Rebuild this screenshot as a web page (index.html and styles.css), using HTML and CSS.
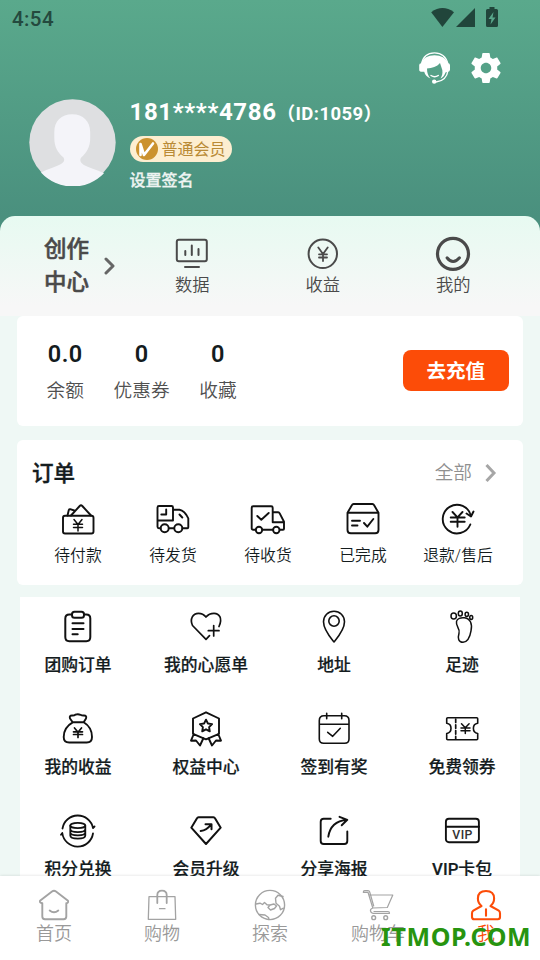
FILE: index.html
```html
<!DOCTYPE html>
<html lang="zh-CN">
<head>
<meta charset="utf-8">
<meta name="viewport" content="width=device-width, initial-scale=1">
<title>我</title>
<link rel="stylesheet" href="styles.css">
</head>
<body>
<div class="app">
  <header class="header">
    <div class="status">
      <span class="clock">4:54</span>
      <svg class="status-icons" viewBox="0 0 70 22">
        <path d="M2.200 5.200Q13.500-3 25 5.200L13.400 20Z"/>
        <path d="M46 1V20H27Z"/>
        <path fill-rule="evenodd" d="M60.500 0h5v2h2q1.500 0 1.500 1.500v15q0 1.500-1.500 1.500h-9q-1.500 0-1.500-1.500v-15q0-1.500 1.500-1.500h2zM64.500 5l-5 7h3l-1 5.500 5-7h-3z"/>
      </svg>
    </div>
    <div class="actions">
      <svg class="act" viewBox="0 0 36 36">
        <path class="hl" d="M4.500 14C6 6 11.500 2.800 17.500 2.800S29 6 31 14" stroke-width="1.300"/>
        <path class="hf" d="M2.200 15q0-1.500 2-1.700C6 8 11 5.300 17.500 5.300S29 8 31 13.300q2 .2 2 2v4.500q0 2-2.500 2l-2 .7c-1 3-2.500 5-5 6 1.500-2.500 2.300-5 1.800-8.500L23 13c-3 4-8 4.800-13 5.500 0 4 1 7.500 3.500 10C10 27 8 25 7.200 21.700H5q-2.800 0-2.800-2z"/>
        <path class="hl" d="M14 25.500q3.700 2.500 7.300 0M31 20.500q-1.500 10.500-12 11.500" stroke-width="1.400"/>
        <circle class="hf" cx="17.200" cy="31.600" r="2.200"/>
      </svg>
      <svg class="act" viewBox="0 0 24 24"><path class="hf" d="M19.430 12.980c.04-.32.07-.64.07-.98s-.03-.66-.07-.98l2.110-1.650c.19-.15.24-.42.12-.64l-2-3.460c-.12-.22-.39-.3-.61-.22l-2.490 1c-.52-.4-1.080-.73-1.690-.98l-.38-2.650C14.460 2.180 14.250 2 14 2h-4c-.25 0-.46.18-.49.42l-.38 2.650c-.61.25-1.170.59-1.690.98l-2.490-1c-.23-.09-.49 0-.61.22l-2 3.460c-.13.22-.07.49.12.64l2.110 1.650c-.04.32-.07.65-.07.98s.03.66.07.98l-2.110 1.650c-.19.15-.24.42-.12.64l2 3.460c.12.22.39.3.61.22l2.490-1c.52.4 1.080.73 1.690.98l.38 2.650c.03.24.24.42.49.42h4c.25 0 .46-.18.49-.42l.38-2.650c.61-.25 1.170-.59 1.690-.98l2.490 1c.23.09.49 0 .61-.22l2-3.460c.12-.22.07-.49-.12-.64zM12 15.500c-1.930 0-3.500-1.570-3.500-3.500s1.570-3.500 3.500-3.500 3.500 1.570 3.500 3.500-1.570 3.500-3.500 3.500z"/></svg>
    </div>
    <div class="profile">
      <svg class="avatar" viewBox="0 0 87 87">
        <circle cx="43.500" cy="43.500" r="43.200" fill="#dedfe1"/>
        <path fill="#f4f4f9" d="M43.200 15.300c11 0 18 7 18 18v6c0 9-4 15-9.200 19.500-1.500 2.500-.5 5 2.500 7 5 3 13 5 20.500 8.500A43.200 43.200 0 0 1 12 73.500c7-3.500 15-5.500 20-8.500 3-2 4-4 2.500-6.500-5.500-4.500-9.200-10.500-9.200-19.500v-6c0-11 7-17.700 17.900-17.700z"/>
      </svg>
      <div class="who">
        <div class="name">181****4786<small>（ID:1059）</small></div>
        <div class="badge">
          <svg viewBox="0 0 22 22"><circle cx="11" cy="11" r="11" fill="#cb922f"/><path d="M4.500 6l3.500 11L17 5.500M4.500 6v11" fill="none" stroke="#fff" stroke-width="2.600"/></svg>
          <span>普通会员</span>
        </div>
        <div class="sign">设置签名</div>
      </div>
    </div>
  </header>

  <section class="creator">
    <div class="creator-title">
      <span>创作<br>中心</span>
      <svg viewBox="0 0 12 18"><path d="M2 2l7 7-7 7"/></svg>
    </div>
    <div class="creator-item">
      <svg viewBox="0 0 36 36"><rect x="2.800" y="3.800" width="30" height="21.500" rx="2"/><path d="M11.300 15v4M17.800 9.500V19M24.500 13v6M11 31h14"/></svg>
      <span>数据</span>
    </div>
    <div class="creator-item">
      <svg viewBox="0 0 36 36"><circle cx="17.800" cy="17.800" r="14.200"/><path d="M13.300 11.500l4.700 6.500 4.700-6.500M18 18v7M14 18.300h8M14 21.500h8" stroke-width="1.800"/></svg>
      <span>收益</span>
    </div>
    <div class="creator-item">
      <svg viewBox="0 0 36 36"><circle cx="18" cy="17.800" r="15.500" stroke-width="3.200"/><path d="M12 21.800q6 7.500 12.500 0" stroke-width="3"/></svg>
      <span>我的</span>
    </div>
  </section>

  <section class="card wallet">
    <div class="stat"><b>0.0</b><span>余额</span></div>
    <div class="stat"><b>0</b><span>优惠券</span></div>
    <div class="stat"><b>0</b><span>收藏</span></div>
    <div class="recharge">去充值</div>
  </section>

  <section class="card orders">
    <div class="orders-head">
      <h2>订单</h2>
      <span class="all">全部</span>
      <svg viewBox="0 0 12 20"><path d="M1.500 2l7.500 8-7.500 8"/></svg>
    </div>
    <div class="order-row">
      <div class="order"><svg viewBox="0 0 36 36"><rect x="3" y="14.800" width="30.500" height="17.700" rx="2"/><path d="M11 14.500L19.700 5q1.300-1.300 2.600 0l8.700 9.500M7.500 14.500l1.300-5.500q.4-1 1.400-.8l4 1.300"/><path d="M14 18.500l4 5 4-5M18 23.500V30M13.500 23.300h9M13.500 26.500h9" stroke-width="1.500"/></svg><span>待付款</span></div>
      <div class="order"><svg viewBox="0 0 36 36"><path d="M5.500 27.300H4q-1.500 0-1.500-1.500V6.500Q2.500 5 4 5h12.500Q18 5 18 6.500v13H2.500M18 8.800h6.500q5 .8 8.800 8.500v9q0 1-1 1h-4.800M13.800 27.300h5.300M11.200 8.500v5H6.300M24.500 13.500l2.800 3"/><circle cx="9.700" cy="27.300" r="4"/><circle cx="23.300" cy="27.300" r="4"/></svg><span>待发货</span></div>
      <div class="order"><svg viewBox="0 0 36 36"><path d="M5.500 28.700H3.200q-1.500 0-1.500-1.500V6.800q0-1.500 1.500-1.500h18q1.500 0 1.500 1.500v14.500H34M22.700 11.300h5.500q1 0 1.500 1l4.300 8.500v7q0 .9-1 .9h-3M12.500 28.700H23M7.300 15l4 3.700 7.400-6.700"/><circle cx="9" cy="29" r="3.200"/><circle cx="26.300" cy="29" r="3.200"/></svg><span>待收货</span></div>
      <div class="order"><svg viewBox="0 0 36 36"><path d="M2.500 11.800L7 4q.5-1 1.500-1h19q1 0 1.500 1l4.500 7.800V29q0 3.300-3.300 3.300H5.800Q2.500 32.300 2.500 29zM2.500 11.800h31M7 19.700h8M7 24.500h5.500M19 22l3.300 3.700 6-7.700"/></svg><span>已完成</span></div>
      <div class="order"><svg viewBox="0 0 36 36"><path d="M30.300 23.500A14.300 14.300 0 1 1 31 15M26.500 12.500l4.500 3 2.500-5M12.500 11l5 5.300 5-5.300M17.500 16.300v9.500M10.700 16.500h14M10.700 20.700h14"/></svg><span>退款/售后</span></div>
    </div>
  </section>

  <section class="tools">
    <div class="tool"><svg viewBox="0 0 36 36"><path d="M12 5.500H9.300q-4 0-4 4V28q0 4.200 4 4.200h17q4 0 4-4.200V9.500q0-4-4-4H24M12.500 14.300h11M12.500 20h11M12.500 25.300h5.200" stroke-width="2"/><rect x="12" y="2.800" width="12" height="6" rx="2.500" stroke-width="2"/></svg><span>团购订单</span></div>
    <div class="tool"><svg viewBox="0 0 36 36"><path d="M31 17.500C35 9 31 4.300 26 4.300Q21 4.300 18 8 15 4.300 10.500 4.300C5 4.300 1.500 10 4.500 16.500L18 30.300l3.500-3.600M25.700 16.500V27M20.300 21.700H31" stroke-width="1.700"/></svg><span>我的心愿单</span></div>
    <div class="tool"><svg viewBox="0 0 36 36"><path d="M18 33C14 28 7.500 20.500 7.500 12.700a10.500 10.500 0 0 1 21 0C28.500 20.500 22 28 18 33z" stroke-width="1.600"/><circle cx="18" cy="12" r="5.200" stroke-width="1.600"/></svg><span>地址</span></div>
    <div class="tool"><svg viewBox="0 0 36 36"><g stroke-width="1.500"><path d="M12.500 12.500C13 9.500 17 8.300 20.500 8.800c6 1 8 6 6.500 13-1 6-3 11-8 11.500-4.500 0-5.500-4-4-9 1.500-5-3.500-6.500-2.500-11.800z"/><ellipse cx="9.700" cy="7" rx="2.700" ry="3"/><ellipse cx="16.300" cy="4.500" rx="2" ry="2.500"/><ellipse cx="22.800" cy="5.300" rx="1.700" ry="2.100"/><ellipse cx="27.200" cy="8.500" rx="1.500" ry="1.900"/></g></svg><span>足迹</span></div>

    <div class="tool"><svg viewBox="0 0 36 36"><path d="M12.700 11.300L10 7.500q-1-3 2-3 2.200.2 3.300-.8Q18 2.800 20.500 3.800q1.500.9 3.500.7 3 0 2 3l-2.300 3.800zM12.700 11.300C7 14.500 3.700 20 3.700 26q0 5.500 5.500 5.500h17.500q5.300 0 5.300-5.500c0-6-3-11.500-8.300-14.700" stroke-width="1.900"/><path d="M14.500 17l3.500 4.200 3.500-4.200M18 21v5.500M13.500 20.800h9M13.500 23.500h9" stroke-width="1.700"/></svg><span>我的收益</span></div>
    <div class="tool"><svg viewBox="0 0 36 36"><path d="M18 1.300L31 7.500v15.300l-13 5.500-13-5.500V7.500zM5.800 23L3 29.700l5-.2 4 5 3.500-7.500M30.200 23l2.800 6.700-5-.2-4 5-3.500-7.500" stroke-width="1.900"/><path d="M18 8.700l1.900 3.800 4.200.6-3 3 .7 4.200-3.800-2-3.800 2 .7-4.200-3-3 4.200-.6z" stroke-width="1.900"/></svg><span>权益中心</span></div>
    <div class="tool"><svg viewBox="0 0 36 36"><path d="M10.700 2.300v5.400M25.700 2.300v5.400M10.700 4.800h15M10.700 4.800H8Q3.300 4.800 3.300 9.500V28q0 4.300 4.500 4.300h20.700Q33 32.300 33 28V9.500q0-4.700-4.700-4.700h-2.600M3.300 13.300H33M11.700 21.300l5 4 7.600-8" stroke-width="1.600"/></svg><span>签到有奖</span></div>
    <div class="tool"><svg viewBox="0 0 36 36"><path d="M3.700 6.700h29q1 0 1 1v4.500a5 5.200 0 0 0 0 10.300v5.200q0 1-1 1h-29q-1 0-1-1v-5.200a5 5.200 0 0 0 0-10.300V7.700q0-1 1-1z" stroke-width="1.600"/><path d="M11.700 8v20" stroke-width="1.700" stroke-dasharray="3.500 2.300"/><path d="M17.500 12.700l3.800 4 3.800-4M21.300 16.700V22.500M17 17h9M17 19.700h9" stroke-width="1.500"/></svg><span>免费领券</span></div>

    <div class="tool"><svg viewBox="0 0 36 36"><path d="M2.500 15.500A15.500 15.500 0 0 1 33 15l1.500-1.500M33 20.500A15.500 15.500 0 0 1 2.300 20L1 21.700" stroke-width="1.800"/><path d="M10.300 12.700v9.800c0 4.200 15 4.200 15 0v-9.800M10.300 16c0 4.200 15 4.200 15 0M10.300 19.300c0 4.200 15 4.200 15 0" stroke-width="1.800"/><ellipse cx="17.800" cy="12.500" rx="7.500" ry="2.700" stroke-width="1.800"/></svg><span>积分兑换</span></div>
    <div class="tool"><svg viewBox="0 0 36 36"><path d="M10.500 4.300h15q1 0 1.500 1l5.700 9.400L18 31 3.300 14.700 9 5.300q.5-1 1.500-1zM12.700 18q6-.5 10.300-6.500M17.500 11.300H23.500v5" stroke-width="2"/></svg><span>会员升级</span></div>
    <div class="tool"><svg viewBox="0 0 36 36"><path d="M14.700 5.700H7.700q-3 0-3 3V28q0 3 3 3h20.600q3 0 3-3V18.500M12.300 23.700Q14.500 8.500 31 6.800M23.500 3.800L31.300 6.800 25.700 12.300" stroke-width="1.900"/></svg><span>分享海报</span></div>
    <div class="tool"><svg viewBox="0 0 36 36"><rect x="1.900" y="5.700" width="33" height="23.600" rx="3" stroke-width="1.900"/><path d="M2 13.700h33" stroke-width="1.900"/><text x="18.600" y="25.900" class="vip">VIP</text></svg><span>VIP卡包</span></div>
  </section>

  <nav class="tabs">
    <div class="tab"><svg viewBox="0 0 36 36"><path d="M16 4.500q2-1.500 4 0l12 9.300q.7 2-1.700 2.500V29.500q0 2.700-2.800 2.700H9q-2.700 0-2.700-2.700V16.300Q3.300 15.800 4 13.800zM13.700 23.500q4.300 3.500 8.600 0" stroke-width="1.900"/></svg><span>首页</span></div>
    <div class="tab"><svg viewBox="0 0 36 36"><path d="M13.300 9.700H5L4.300 32.300h27.400L31 9.700h-8.300M15.500 21.700h5.500M13.300 9.700h9.400" stroke-width="1.300"/><path d="M13.300 16V8.300q0-4.600 4.700-4.600t4.700 4.600V16" stroke-width="1.800"/></svg><span>购物</span></div>
    <div class="tab"><svg viewBox="0 0 36 36"><circle cx="18" cy="18" r="14.600"/><path d="M4 17l4-.8 2.500 1.300 2-2 2.500 2.300 3.500.2M18 18l-2 2.500 2.500 2.500 4-1.500 2-2.500-2.500-2zM7 27.500l6 .5 3.500 2.500.5 2M31 9.500l-5-1.300-2.500 3 .5 5 3.500 3 1 3.500 3-1.500"/></svg><span>探索</span></div>
    <div class="tab"><svg viewBox="0 0 36 36"><path d="M9.300 8H32.800l-5.500 12.500-14.500.5L8 5.300H3.300q0-1.600 1.500-1.600H8q1.300 0 1.700 1.300l4 14M12.800 21q-2.800 1-2.300 3 .5 2.300 2.500 2.300h16.500q0-1.800-1.500-1.800H14" stroke-width="1.200"/><circle cx="13.700" cy="30.700" r="1.900"/><circle cx="25.700" cy="30.700" r="1.900"/></svg><span>购物车</span></div>
    <div class="tab active"><svg viewBox="0 0 36 36"><path d="M13.500 19Q9.900 16 9.900 11.500 9.900 4 18 4t8.100 7.500q0 4.500-3.600 7.500l8.300 4.700q1.200.8 1.200 2.500V30q0 2.200-2.200 2.200H6.200Q4 32.200 4 30v-3.800q0-1.700 1.300-2.500zM18 22.300v6.500" stroke-width="2.100"/></svg><span>我</span></div>
  </nav>
  <div class="watermark">ITMOP.COM</div>
</div>
</body>
</html>
```
FILE: styles.css
```css
* { box-sizing: border-box; }
body {
  margin: 0;
  font-family: Roboto, "Noto Sans CJK SC", sans-serif;
  color: #141c1e;
  background: #eff8f5;
}
.app {
  position: relative;
  width: 540px;
  height: 960px;
  overflow: hidden;
  display: flex;
  flex-direction: column;
}
svg { display: block; flex: none; fill: none; stroke-linecap: round; stroke-linejoin: round; }
span { white-space: nowrap; }

.header {
  flex: none;
  height: 232px;
  background: linear-gradient(#5aa98c, #4a907e 216px);
}
.status { display: flex; justify-content: space-between; height: 37px; padding: 7px 41px 0 12px; }
.clock { font-size: 20.5px; line-height: 24px; font-weight: 500; letter-spacing: .4px; color: #24493e; }
.status-icons { width: 70px; height: 22px; fill: #21453b; }
.actions { display: flex; justify-content: flex-end; gap: 15px; height: 62px; padding: 13px 36px 0 0; }
.act { width: 36px; height: 36px; }
.hf { fill: #fff; }
.hl { stroke: #fff; }
.profile { display: flex; gap: 14px; padding-left: 28.500px; }
.avatar { width: 87px; height: 87px; }
.who { color: #fff; }
.name { font-size: 24px; line-height: 28px; font-weight: 700; letter-spacing: .65px; margin-top: -1px; white-space: nowrap; }
.name small { font-size: 18.500px; letter-spacing: .4px; }
.badge {
  display: flex; align-items: center; gap: 4px;
  width: 102.500px; height: 26px; margin-top: 8px; padding-left: 6px;
  border-radius: 13px;
  background: #fdeed0; color: #b98a35;
  font-size: 16px; line-height: 26px;
}
.badge svg { width: 22px; height: 22px; }
.badge span { padding-top: 1px; }
.sign { margin-top: 7px; font-size: 16px; line-height: 24px; font-weight: 500; color: #eef4f2; -webkit-text-stroke: .3px; }

.creator {
  flex: none;
  display: flex;
  height: 99.500px;
  margin-top: -16px;
  border-radius: 15px 15px 0 0;
  background: linear-gradient(#e7faf1, #f7f7f7 90%);
  color: #4a4a4a;
}
.creator-title { width: 127px; display: flex; align-items: flex-start; padding: 17px 0 0 44px; font-size: 22.500px; line-height: 33px; font-weight: 500; -webkit-text-stroke: .5px; }
.creator-title svg { width: 12px; height: 18px; margin: 24px 0 0 15px; stroke: #666; stroke-width: 3; }
.creator-item { width: 130.500px; display: flex; flex-direction: column; align-items: center; padding-top: 20px; font-size: 17.300px; line-height: 26px; font-weight: 350; }
.creator-item svg { width: 36px; height: 36px; stroke: #4a4a4a; stroke-width: 2; }

.card { flex: none; margin: 0 17px; background: #fff; border-radius: 6px; }
.wallet { height: 110px; display: flex; padding: 24px 14.500px 0 29.500px; }
.stat { display: flex; flex-direction: column; align-items: center; margin-right: 29.700px; }
.stat b { font-size: 23.500px; line-height: 28px; letter-spacing: .4px; font-weight: 600; }
.stat span { font-size: 18.700px; line-height: 28px; margin-top: 9px; font-weight: 350; color: #505050; }
.recharge {
  margin: 10px 0 0 auto; width: 105.500px; height: 41.500px; border-radius: 8px;
  background: #fc4c08; color: #fff; text-align: center;
  font-size: 19.500px; line-height: 44px; font-weight: 700;
}

.orders { height: 145px; margin-top: 14.500px; }
.orders-head { display: flex; align-items: center; height: 60px; padding: 7px 26px 0 15px; }
.orders-head h2 { margin: 0 auto 0 0; font-size: 21.500px; line-height: 32px; font-weight: 500; -webkit-text-stroke: .4px; }
.all { font-size: 18.700px; line-height: 28px; font-weight: 350; color: #909090; margin-top: -2px; }
.orders-head svg { width: 12px; height: 20px; margin: -1px 0 0 13px; stroke: #a6a6a6; stroke-width: 3; stroke-linecap: butt; stroke-linejoin: miter; }
.order-row { display: grid; grid-template-columns: repeat(5, 95px); padding-left: 13.500px; }
.order { display: flex; flex-direction: column; align-items: center; margin-top: 1px; font-size: 15.800px; line-height: 24px; font-weight: 350; }
.order svg { width: 36px; height: 36px; margin-bottom: 7px; stroke: #111; stroke-width: 1.900; }

.tools {
  flex: none;
  display: grid; grid-template-columns: repeat(4, 128px); grid-auto-rows: 102px; justify-content: center;
  height: 290px; margin: 12px 20px 0; padding-top: 12px;
  overflow: hidden; background: #fff;
}
.tool { display: flex; flex-direction: column; align-items: center; font-size: 16.800px; line-height: 26px; font-weight: 500; }
.tool svg { width: 36px; height: 36px; margin-bottom: 7px; stroke: #111; }
.tool span { -webkit-text-stroke: .2px; }
.vip { font: 500 12.300px Roboto, sans-serif; letter-spacing: .5px; text-anchor: middle; fill: #333; stroke: none; }

.tabs {
  position: absolute; left: 0; right: 0; bottom: 0;
  display: grid; grid-template-columns: repeat(5, 1fr);
  height: 84px; padding-top: 11px;
  background: #fff; box-shadow: 0 0 3px rgba(0, 0, 0, .14);
}
.tab { display: flex; flex-direction: column; align-items: center; font-size: 18px; line-height: 26px; font-weight: 350; color: #999; }
.tab svg { width: 36px; height: 36px; margin-bottom: -2px; stroke: #a3a3a3; stroke-width: 1.400; }
.tab.active { color: #fc4c08; }
.tab.active svg { stroke: #fc4c08; }

.watermark {
  position: absolute; left: 381px; top: 919px;
  font: 700 25px/34px "Noto Sans", sans-serif;
  letter-spacing: .65px;
  color: #27940f;
}
```
